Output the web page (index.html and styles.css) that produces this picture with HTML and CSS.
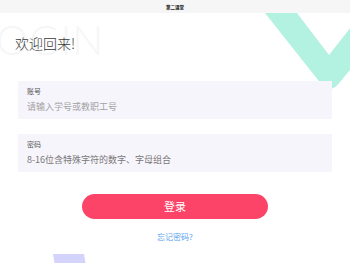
FILE: index.html
```html
<!DOCTYPE html>
<html lang="zh-CN">
<head>
<meta charset="utf-8">
<title>第二课堂</title>
<link rel="stylesheet" href="styles.css">
</head>
<body>
<header class="topbar"><span class="topbar-title">第二课堂</span></header>
<main class="page">
  <div class="bg-word" aria-hidden="true">LOGIN</div>
  <svg class="deco-v" viewBox="250 13 100 90" aria-hidden="true"><path d="M265 13 H297 L329 55 L362 13 H392 V20 L340 82 Q329 97 318 80 Z" fill="#b3f1e0"/></svg>
  <svg class="deco-bar" viewBox="0 0 40 12" aria-hidden="true"><path d="M1 0 H32 L34 12 H3 Z" fill="#d3d3fb"/></svg>

  <h1 class="welcome">欢迎回来!</h1>

  <form class="login-form">
    <label class="field">
      <span class="field-label">账号</span>
      <input class="field-input" type="text" placeholder="请输入学号或教职工号">
    </label>
    <label class="field">
      <span class="field-label">密码</span>
      <input class="field-input field-input--dark" type="password" placeholder="8-16位含特殊字符的数字、字母组合">
    </label>
    <button class="submit" type="button">登录</button>
    <a class="forgot" href="#">忘记密码?</a>
  </form>
</main>
</body>
</html>
```
FILE: styles.css
```css
* { box-sizing: border-box; }
html, body {
  margin: 0;
  padding: 0;
  background: #fff;
  font-family: "Noto Sans CJK SC", "Noto Sans", sans-serif;
}
body {
  width: 350px;
  height: 263px;
  overflow: hidden;
}
.topbar {
  position: relative;
  z-index: 2;
  height: 13px;
  background: #f6f6f6;
  display: flex;
  align-items: center;
  justify-content: center;
}
.topbar-title {
  font-size: 4.5px;
  line-height: 6px;
  font-weight: 700;
  color: #222;
}
.page {
  position: relative;
  height: 250px;
  overflow: hidden;
}
.bg-word {
  position: absolute;
  left: -24px;
  top: 4px;
  font-family: Lato, "Open Sans", sans-serif;
  font-weight: 300;
  font-size: 41px;
  line-height: 46px;
  letter-spacing: 1px;
  color: #f6f6f6;
  z-index: 0;
}
.deco-v {
  position: absolute;
  left: 250px;
  top: 0;
  width: 100px;
  height: 90px;
  z-index: 0;
}
.deco-bar {
  position: absolute;
  left: 52px;
  top: 241px;
  width: 40px;
  height: 12px;
  z-index: 0;
}
.welcome {
  position: relative;
  z-index: 1;
  margin: 20px 0 0 15px;
  font-size: 14px;
  line-height: 20px;
  font-weight: 300;
  color: #3a3a3a;
}
.login-form {
  position: relative;
  z-index: 1;
  margin-top: 28px;
  padding: 0 18px;
  display: flex;
  flex-direction: column;
}
.field {
  display: flex;
  flex-direction: column;
  height: 38px;
  padding: 5px 9px 0;
  background: #f7f5fc;
  margin-bottom: 15px;
}
.field-label {
  font-size: 7px;
  line-height: 10px;
  color: #555;
  margin-bottom: 4px;
}
.field-input {
  border: 0;
  outline: 0;
  padding: 0;
  margin: 0;
  background: transparent;
  font-family: inherit;
  font-size: 9px;
  line-height: 14px;
  height: 14px;
  color: #333;
}
.field-input::placeholder { color: #a2a2a2; }
.field-input--dark::placeholder { color: #777; }
.submit {
  align-self: center;
  width: 186px;
  height: 25px;
  margin-top: 7px;
  border: 0;
  border-radius: 13px;
  background: #fc4469;
  color: #fff;
  font-family: inherit;
  font-size: 11px;
  line-height: 25px;
  padding: 0;
}
.forgot {
  align-self: center;
  margin-top: 12px;
  font-size: 8px;
  line-height: 12px;
  color: #5a9ff0;
  text-decoration: none;
}
```
